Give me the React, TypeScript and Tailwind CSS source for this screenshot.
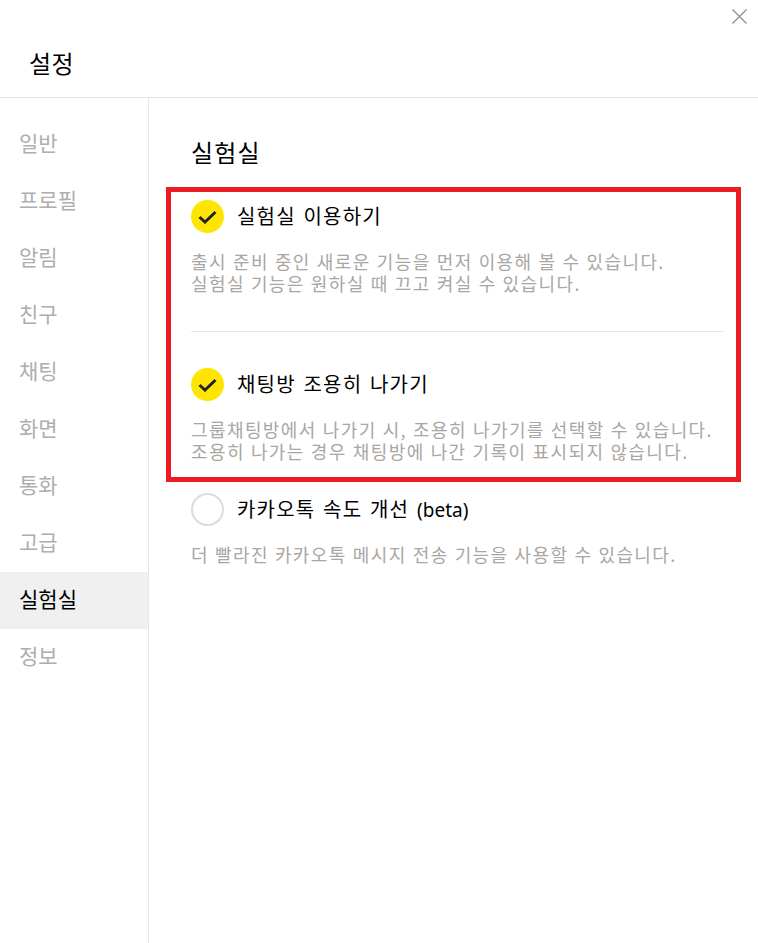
const FONT = "font-['Noto_Sans_CJK_KR','Noto_Sans',sans-serif]";

const MENU = ["일반", "프로필", "알림", "친구", "채팅", "화면", "통화", "고급", "실험실", "정보"];

const OPTIONS = [
  {
    label: "실험실 이용하기",
    checked: true,
    lines: ["출시 준비 중인 새로운 기능을 먼저 이용해 볼 수 있습니다.", "실험실 기능은 원하실 때 끄고 켜실 수 있습니다."],
    box: "pb-[37px] border-b border-[#e6e6e6] mb-[36px]",
  },
  {
    label: "채팅방 조용히 나가기",
    checked: true,
    lines: ["그룹채팅방에서 나가기 시, 조용히 나가기를 선택할 수 있습니다.", "조용히 나가는 경우 채팅방에 나간 기록이 표시되지 않습니다."],
    box: "mb-[31px]",
  },
  {
    label: "카카오톡 속도 개선",
    beta: true,
    checked: false,
    lines: ["더 빨라진 카카오톡 메시지 전송 기능을 사용할 수 있습니다."],
    box: "",
  },
];

function CheckCircle({ checked }: { checked: boolean }) {
  if (!checked) {
    return <div className="w-[33px] h-[33px] rounded-full border-2 border-[#dcdcdc] bg-white shrink-0" />;
  }
  return (
    <div className="w-[33px] h-[33px] rounded-full bg-[#ffe600] shrink-0 flex items-center justify-center">
      <svg width="19" height="15" viewBox="0 0 19 15" fill="none">
        <path d="M1.5 8 L7 13 L17.5 3" stroke="#222222" strokeWidth="3" />
      </svg>
    </div>
  );
}

export default function App() {
  return (
    <div className={`relative w-[758px] h-[943px] bg-white overflow-hidden ${FONT}`}>
      <button className="absolute top-[9px] right-[11px] w-[15px] h-[15px]">
        <svg width="15" height="15" viewBox="0 0 15 15" fill="none">
          <path d="M0.5 0.5 L14.5 14.5 M14.5 0.5 L0.5 14.5" stroke="#8f8f8f" strokeWidth="1.3" />
        </svg>
      </button>

      <header className="h-[98px] border-b border-[#e6e6e6] flex items-center pl-[29px] pt-[28px]">
        <h1 className="text-[24px] leading-none tracking-[0.5px] text-black">설정</h1>
      </header>

      <div className="flex h-[845px]">
        <nav className="w-[149px] border-r border-[#e6e6e6] pt-[18px] shrink-0">
          {MENU.map((m) => (
            <div
              key={m}
              className={`h-[57px] pl-[19px] pb-[4px] flex items-center text-[21px] ${m === "실험실" ? "bg-[#f0f0f0] text-black" : "text-[#aeaeae]"}`}
            >
              {m}
            </div>
          ))}
        </nav>

        <main className="flex-1 pl-[42px] pr-[34px] pt-[35px]">
          <h2 className="text-[24px] leading-[38px] tracking-[1.2px] text-black mb-[29px]">실험실</h2>
          {OPTIONS.map((o) => (
            <section key={o.label} className={o.box}>
              <div className="flex items-center gap-[13px] h-[33px]">
                <CheckCircle checked={o.checked} />
                <span className="pb-[1px] text-[20px] text-black tracking-[1.2px] [word-spacing:2px] whitespace-nowrap">
                  {o.label}
                  {o.beta && <span className="text-[19px] tracking-normal [word-spacing:3px] font-['Noto_Sans',sans-serif]"> (beta)</span>}
                </span>
              </div>
              <div className="mt-[17px] text-[18px] leading-[22px] tracking-[1.4px] [word-spacing:0.6px] text-[#aaa6a2] whitespace-nowrap">
                {o.lines.map((l) => (
                  <p key={l}>{l}</p>
                ))}
              </div>
            </section>
          ))}
        </main>
      </div>

      {/* red annotation box over the first two options */}
      <div className="absolute left-[166px] top-[187px] w-[575px] h-[295px] border-[5px] border-[#ed1c24] pointer-events-none" />
    </div>
  );
}
